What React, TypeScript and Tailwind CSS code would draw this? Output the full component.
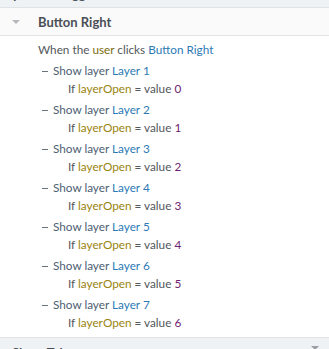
import React from "react";

const rows = [0, 1, 2, 3, 4, 5, 6];

const App: React.FC = () => {
  return (
    <div
      className="w-[329px] h-[349px] overflow-hidden bg-white text-[11.75px] leading-[18px] text-[#53575b]"
      style={{ fontFamily: "Lato, sans-serif" }}
    >
      {/* previous section, cut off */}
      <div className="h-[8px] overflow-hidden bg-[#eef2f5] border-b border-[#dfe3e6]">
        <div className="-mt-[15px] text-[13px] font-bold text-[#4a4f55] whitespace-nowrap">
          My Menu Toggle
        </div>
      </div>

      {/* Header */}
      <div className="h-[28px] flex items-center bg-[#fafafa] border-b border-[#e2e4e6]">
        <div className="w-[38px] flex justify-center pr-[7px]">
          <div className="w-0 h-0 border-l-[4px] border-r-[4px] border-t-[4px] border-l-transparent border-r-transparent border-t-[#b4b8bc]" />
        </div>
        <span className="text-[13px] font-bold text-[#4a4f55]">Button Right</span>
      </div>

      {/* Body */}
      <div className="pl-[38px] pt-[5px] pb-[5px] border-b border-[#e2e4e6]">
        <div>
          When the <span className="text-[#7d6c0f]">user</span> clicks{" "}
          <span className="text-[#2c7ab5]">Button Right</span>
        </div>
        {rows.map((i) => (
          <div key={i} className="mt-[3px]">
            <div className="flex items-center pl-[4px]">
              <span className="w-[6px] h-px bg-[#6a737c] mr-[5px]" />
              <span className="text-[#4d6072]">
                Show layer <span className="text-[#2c7ab5]">Layer {i + 1}</span>
              </span>
            </div>
            <div className="pl-[30px]">
              If <span className="text-[#9a8410]">layerOpen</span> = value{" "}
              <span className="text-[#6f1f6f]">{i}</span>
            </div>
          </div>
        ))}
      </div>

      {/* next section, cut off */}
      <div className="h-[24px] flex items-start bg-[#eef2f5] pt-[6px]">
        <span className="pl-[12px] text-[13px] font-bold text-[#4a4f55] whitespace-nowrap">
          Show Tab
        </span>
        <div className="ml-auto mr-[10px] mt-[2px] w-0 h-0 border-l-[4px] border-r-[4px] border-t-[4px] border-l-transparent border-r-transparent border-t-[#9aa0a6]" />
      </div>
    </div>
  );
};

export default App;
